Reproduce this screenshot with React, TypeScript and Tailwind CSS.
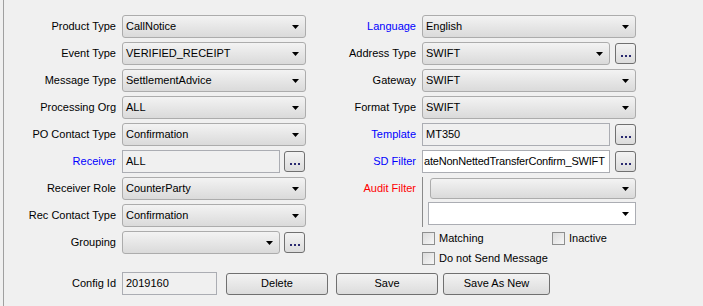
import type { ReactNode } from 'react'

const font = { fontFamily: '"Liberation Sans", Arial, sans-serif' }

function Arrow() {
  return (
    <svg width="7" height="4" viewBox="0 0 7 4" className="shrink-0">
      <path d="M0 0H7L3.5 4Z" fill="#000" />
    </svg>
  )
}

function Combo({ value = '', width, white }: { value?: string; width: string; white?: boolean }) {
  return (
    <div
      className={`${width} h-[23px] flex items-center justify-between pl-[3px] pr-[6px] border ${
        white ? 'bg-white border-[#abadb3]' : 'rounded-[3px] border-[#acacac] bg-linear-to-b from-[#f3f3f3] to-[#dadada]'
      }`}
    >
      <span className="whitespace-nowrap">{value}</span>
      <Arrow />
    </div>
  )
}

function Field({ value, width, white }: { value: string; width: string; white?: boolean }) {
  return (
    <div
      className={`${width} h-[23px] flex items-center overflow-hidden border border-[#abadb3] ${
        white ? 'bg-white pl-[1px] tracking-[-0.2px]' : 'bg-[#f0f0f0] pl-[3px]'
      }`}
    >
      <span className="whitespace-nowrap">{value}</span>
    </div>
  )
}

function Dots() {
  return (
    <div className="w-[21px] h-[21px] ml-[4px] rounded-[3px] border border-[#707070] bg-linear-to-b from-[#f3f3f3] to-[#dcdcdc] flex items-end justify-center gap-[2px] pb-[6px]">
      <span className="w-[2px] h-[2px] bg-[#2a2a70]" />
      <span className="w-[2px] h-[2px] bg-[#2a2a70]" />
      <span className="w-[2px] h-[2px] bg-[#2a2a70]" />
    </div>
  )
}

function Row({ label, color = 'text-black', labelWidth, children }: { label: string; color?: string; labelWidth: string; children: ReactNode }) {
  return (
    <div className="flex items-center h-[23px]">
      <div className={`${labelWidth} text-right pr-[6px] ${color}`}>{label}</div>
      {children}
    </div>
  )
}

function Check({ label }: { label: string }) {
  return (
    <div className="flex items-center gap-[4px] h-[14px]">
      <span className="w-[13px] h-[13px] border border-[#8e8f8f] bg-linear-to-br from-[#dcdcdc] to-[#f6f6f6]" />
      <span>{label}</span>
    </div>
  )
}

function Button({ label, width, ml }: { label: string; width: string; ml: string }) {
  return (
    <div className={`${width} ${ml} h-[22px] rounded-[3px] border border-[#707070] bg-linear-to-b from-[#f3f3f3] to-[#dcdcdc] flex items-center justify-center`}>
      {label}
    </div>
  )
}

export default function App() {
  return (
    <div className="w-[703px] h-[306px] bg-[#f0f0f0] text-[11px] text-black overflow-hidden" style={font}>
      <div className="ml-[3px] h-full border-l border-[#a0a0a0]">
        <div className="h-[272px] pt-[15px] flex">
          <div className="w-[302px] flex flex-col gap-[4px]">
            <Row label="Product Type" labelWidth="w-[118px]"><Combo value="CallNotice" width="w-[184px]" /></Row>
            <Row label="Event Type" labelWidth="w-[118px]"><Combo value="VERIFIED_RECEIPT" width="w-[184px]" /></Row>
            <Row label="Message Type" labelWidth="w-[118px]"><Combo value="SettlementAdvice" width="w-[184px]" /></Row>
            <Row label="Processing Org" labelWidth="w-[118px]"><Combo value="ALL" width="w-[184px]" /></Row>
            <Row label="PO Contact Type" labelWidth="w-[118px]"><Combo value="Confirmation" width="w-[184px]" /></Row>
            <Row label="Receiver" color="text-[#0000ff]" labelWidth="w-[118px]">
              <Field value="ALL" width="w-[158px]" />
              <Dots />
            </Row>
            <Row label="Receiver Role" labelWidth="w-[118px]"><Combo value="CounterParty" width="w-[184px]" /></Row>
            <Row label="Rec Contact Type" labelWidth="w-[118px]"><Combo value="Confirmation" width="w-[184px]" /></Row>
            <Row label="Grouping" labelWidth="w-[118px]">
              <Combo width="w-[158px]" />
              <Dots />
            </Row>
          </div>
          <div className="flex flex-col gap-[4px]">
            <Row label="Language" color="text-[#0000ff]" labelWidth="w-[116px]"><Combo value="English" width="w-[214px]" /></Row>
            <Row label="Address Type" labelWidth="w-[116px]">
              <Combo value="SWIFT" width="w-[188px]" />
              <div className="ml-[1px]"><Dots /></div>
            </Row>
            <Row label="Gateway" labelWidth="w-[116px]"><Combo value="SWIFT" width="w-[214px]" /></Row>
            <Row label="Format Type" labelWidth="w-[116px]"><Combo value="SWIFT" width="w-[214px]" /></Row>
            <Row label="Template" color="text-[#0000ff]" labelWidth="w-[116px]">
              <Field value="MT350" width="w-[188px]" />
              <div className="ml-[1px]"><Dots /></div>
            </Row>
            <Row label="SD Filter" color="text-[#0000ff]" labelWidth="w-[116px]">
              <Field value="ateNonNettedTransferConfirm_SWIFT" width="w-[188px]" white />
              <div className="ml-[1px]"><Dots /></div>
            </Row>
            <div className="flex">
              <div className="w-[116px] h-[23px] flex items-center justify-end pr-[6px] text-[#ff0000]">Audit Filter</div>
              <div className="w-[214px] border-l border-[#8a8a8a] pl-[5px] pt-[1px] pb-[2px] flex flex-col gap-[3px]">
                <div className="ml-[2px]">
                  <div className="w-[206px] h-[21px] flex items-center justify-end pr-[6px] rounded-[3px] border border-[#acacac] bg-linear-to-b from-[#f3f3f3] to-[#dadada]">
                    <Arrow />
                  </div>
                </div>
                <Combo width="w-[208px]" white />
              </div>
            </div>
            <div className="pl-[116px] flex flex-col gap-[6px]">
              <div className="flex">
                <div className="w-[130px]"><Check label="Matching" /></div>
                <Check label="Inactive" />
              </div>
              <Check label="Do not Send Message" />
            </div>
          </div>
        </div>
        <div className="flex items-center">
          <div className="w-[118px] text-right pr-[6px]">Config Id</div>
          <Field value="2019160" width="w-[95px]" />
          <Button label="Delete" width="w-[102px]" ml="ml-[9px]" />
          <Button label="Save" width="w-[102px]" ml="ml-[8px]" />
          <Button label="Save As New" width="w-[107px]" ml="ml-[5px]" />
        </div>
      </div>
    </div>
  )
}
